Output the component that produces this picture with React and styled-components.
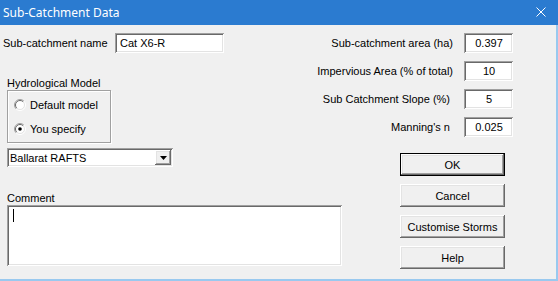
import React from "react";
import styled, { createGlobalStyle, css } from "styled-components";

const Global = createGlobalStyle`
  html, body { margin: 0; padding: 0; background: #f0f0f0; }
  * { box-sizing: border-box; }
`;

const sunken = css`
  background: #fff;
  box-shadow: inset 1px 1px 0 #a0a0a0, inset -1px -1px 0 #fff,
    inset 2px 2px 0 #696969, inset -2px -2px 0 #e3e3e3;
`;

const raised = css`
  background: #f0f0f0;
  box-shadow: inset -1px -1px 0 #696969, inset 1px 1px 0 #fff,
    inset -2px -2px 0 #a0a0a0, inset 2px 2px 0 #e3e3e3;
`;

const Window = styled.div`
  width: 558px;
  height: 281px;
  display: flex;
  flex-direction: column;
  font-family: "Liberation Sans", Arial, sans-serif;
  font-size: 11px;
  color: #000;
  overflow: hidden;
`;

const TitleBar = styled.div`
  height: 25px;
  flex: none;
  background: #2b7bd0;
  color: #fff;
  display: flex;
  align-items: center;
  justify-content: space-between;
  padding: 0 12px 1px 3px;
  font-family: "Noto Sans", "Liberation Sans", sans-serif;
  font-size: 12px;
`;

const Body = styled.div`
  flex: 1;
  display: flex;
  background: #f0f0f0;
  border-right: 2px solid #99c9ef;
  border-bottom: 2px solid #99c9ef;
`;

const LeftCol = styled.div`
  width: 345px;
  flex: none;
  display: flex;
  flex-direction: column;
  padding-top: 8px;
`;

const NameRow = styled.div`
  display: flex;
  align-items: center;
  height: 20px;
  padding-left: 3px;
`;

const NameLabel = styled.span`
  width: 112px;
  flex: none;
`;

const Edit = styled.div`
  ${sunken};
  flex: none;
  width: ${(p) => p.$w}px;
  height: ${(p) => p.$h || 20}px;
  display: flex;
  align-items: center;
  justify-content: ${(p) => (p.$center ? "center" : "flex-start")};
  padding: ${(p) => (p.$center ? "0 0 0 1px" : "0 0 0 5px")};
  white-space: nowrap;
`;

const Section = styled.div`
  padding-left: 7px;
  display: flex;
  flex-direction: column;
  align-items: flex-start;
`;

const Caption = styled.div`
  line-height: 14px;
  margin-top: ${(p) => p.$mt}px;
`;

const GroupBox = styled.div`
  width: 104px;
  height: 53px;
  border: 1px solid #a0a0a0;
  box-shadow: inset 1px 1px 0 #fff, 1px 1px 0 #fff;
  display: flex;
  flex-direction: column;
  gap: 8px;
  padding: 6px 0 0 6px;
`;

const RadioRow = styled.label`
  display: flex;
  align-items: center;
  gap: 4px;
  height: 16px;
`;

const Combo = styled.div`
  ${sunken};
  margin-top: 5px;
  width: 166px;
  height: 19px;
  display: flex;
  align-items: center;
  justify-content: space-between;
  padding: 2px 2px 2px 3px;
`;

const ComboButton = styled.div`
  ${raised};
  width: 16px;
  height: 15px;
  display: flex;
  align-items: center;
  justify-content: center;
`;

const TextArea = styled.div`
  ${sunken};
  width: 335px;
  height: 61px;
  padding: 4px 0 0 6px;
`;

const Caret = styled.div`
  width: 1px;
  height: 13px;
  background: #000;
`;

const RightCol = styled.div`
  flex: 1;
  min-width: 0;
  display: flex;
  flex-direction: column;
  padding-top: 8px;
`;

const Fields = styled.div`
  display: flex;
  flex-direction: column;
  gap: 8px;
  padding-right: 43px;
`;

const FieldRow = styled.div`
  display: flex;
  align-items: center;
  justify-content: flex-end;
  gap: ${(p) => p.$gap || 11}px;
  height: 20px;
`;

const FieldLabel = styled.span`
  flex: none;
  white-space: nowrap;
`;

const Buttons = styled.div`
  margin-top: 16px;
  padding-left: 55px;
  display: flex;
  flex-direction: column;
  gap: 8px;
`;

const Button = styled.div`
  ${raised};
  width: 105px;
  height: 23px;
  display: flex;
  align-items: center;
  justify-content: center;
  ${(p) =>
    p.$default &&
    css`
      box-shadow: inset 0 0 0 1px #000, inset -2px -2px 0 #696969,
        inset 2px 2px 0 #fff, inset -3px -3px 0 #a0a0a0,
        inset 3px 3px 0 #e3e3e3;
    `}
`;

const Radio = ({ checked }) => (
  <svg width="12" height="12" viewBox="0 0 12 12">
    <circle cx="6" cy="6" r="5" fill="#fff" />
    <path d="M2.1 9.9 A5.5 5.5 0 0 1 9.9 2.1" fill="none" stroke="#a0a0a0" />
    <path d="M2.8 9.2 A4.5 4.5 0 0 1 9.2 2.8" fill="none" stroke="#696969" />
    <path d="M9.9 2.1 A5.5 5.5 0 0 1 2.1 9.9" fill="none" stroke="#fff" />
    <path d="M9.2 2.8 A4.5 4.5 0 0 1 2.8 9.2" fill="none" stroke="#e3e3e3" />
    {checked && <circle cx="6" cy="6" r="1.8" fill="#000" />}
  </svg>
);

const CloseIcon = () => (
  <svg width="10" height="10" viewBox="0 0 10 10">
    <path d="M0.5 0.5 L9.5 9.5 M9.5 0.5 L0.5 9.5" stroke="#fff" strokeWidth="1" />
  </svg>
);

const Arrow = () => (
  <svg width="7" height="4" viewBox="0 0 7 4">
    <path d="M0 0 H7 L3.5 4 Z" fill="#000" />
  </svg>
);

const fields = [
  ["Sub-catchment area (ha)", "0.397", 11],
  ["Impervious Area (% of total)", "10", 11],
  ["Sub Catchment Slope (%)", "5", 14],
  ["Manning's n", "0.025", 14],
];

export default function App() {
  return (
    <>
      <Global />
      <Window>
        <TitleBar>
          <span>Sub-Catchment Data</span>
          <CloseIcon />
        </TitleBar>
        <Body>
          <LeftCol>
            <NameRow>
              <NameLabel>Sub-catchment name</NameLabel>
              <Edit $w={109}>Cat X6-R</Edit>
            </NameRow>
            <Section>
              <Caption $mt={23}>Hydrological Model</Caption>
              <GroupBox>
                <RadioRow>
                  <Radio />
                  <span>Default model</span>
                </RadioRow>
                <RadioRow>
                  <Radio checked />
                  <span>You specify</span>
                </RadioRow>
              </GroupBox>
              <Combo>
                <span>Ballarat RAFTS</span>
                <ComboButton>
                  <Arrow />
                </ComboButton>
              </Combo>
              <Caption $mt={24}>Comment</Caption>
              <TextArea>
                <Caret />
              </TextArea>
            </Section>
          </LeftCol>
          <RightCol>
            <Fields>
              {fields.map(([label, value, gap]) => (
                <FieldRow key={label} $gap={gap}>
                  <FieldLabel>{label}</FieldLabel>
                  <Edit $w={49} $center>
                    {value}
                  </Edit>
                </FieldRow>
              ))}
            </Fields>
            <Buttons>
              <Button $default>OK</Button>
              <Button>Cancel</Button>
              <Button>Customise Storms</Button>
              <Button>Help</Button>
            </Buttons>
          </RightCol>
        </Body>
      </Window>
    </>
  );
}
